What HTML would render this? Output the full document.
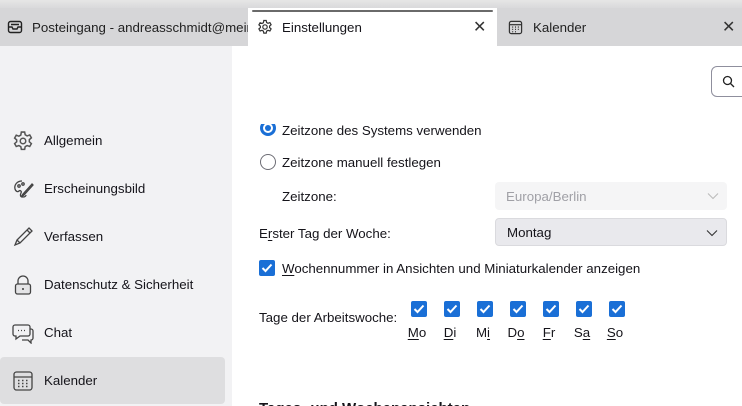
<!DOCTYPE html>
<html><head><meta charset="utf-8">
<style>
*{box-sizing:border-box;margin:0;padding:0}
html,body{width:742px;height:406px;overflow:hidden}
body{font-family:"Liberation Sans",sans-serif;font-size:13.3px;color:#15141a;background:#fff;position:relative}
svg{flex-shrink:0}
.abs{position:absolute}
#top{left:0;top:0;width:742px;height:8px;background:linear-gradient(#e6e6e6,#d9d9db)}
#strip{left:0;top:8px;width:742px;height:38px;background:#d6d6d8}
.tab{top:8px;height:38px;display:flex;align-items:center;white-space:nowrap;overflow:hidden}
#side{left:0;top:46px;width:232px;height:360px;background:#f2f2f4}
.item{left:0;width:225px;height:47px;display:flex;align-items:center;padding-left:12px}
.item svg{margin-right:10px}
.sel{background:#dedee0;border-radius:4px}
.dd{left:495px;width:232px;height:28px;border-radius:4px;padding-left:11px;display:flex;align-items:center}
.cb{width:16px;height:16px;background:#1a6fd6;border-radius:2px;display:flex;align-items:center;justify-content:center}
.day{top:301px;width:16px}
.dl{top:325px;width:30px;text-align:center}
u{text-decoration:underline;text-underline-offset:2px}
</style></head><body>
<div id="top" class="abs"></div>
<div id="strip" class="abs"></div>
<div class="abs tab" style="left:0;width:248px;padding-left:7px">
<svg width="16" height="16" viewBox="0 0 16 16" fill="none" stroke="#222" stroke-width="1.4"><rect x="1.5" y="2.5" width="13" height="11" rx="2"/><path d="M1.5 8h3.5l1 2h4l1-2h3.5M4 5.5h8"/></svg>
<span style="margin-left:9px;color:#222">Posteingang - andreasschmidt@mein.g</span></div>
<div class="abs tab" style="left:248px;width:249px;background:#fff;padding-left:9px">
<div class="abs" style="left:4px;top:2px;width:241px;height:2px;background:#6a6a6a;border-radius:1px"></div>
<svg width="16" height="16" viewBox="0 0 16 16" fill="none" stroke="#333" stroke-width="1.2"><path d="M6.8 1.5h2.4l.4 2 1.4.8 1.9-.7 1.2 2.1-1.5 1.3v1.6l1.5 1.3-1.2 2.1-1.9-.7-1.4.8-.4 2H6.8l-.4-2-1.4-.8-1.9.7-1.2-2.1 1.5-1.3V7.2L1.9 5.9l1.2-2.1 1.9.7 1.4-.8z"/><circle cx="8" cy="8" r="2.2"/></svg>
<span style="margin-left:9px">Einstellungen</span>
<span class="abs" style="left:225px;top:9px;font-size:16px;color:#333">✕</span></div>
<div class="abs tab" style="left:508px;width:234px">
<svg width="15" height="15" viewBox="0 0 16 16" fill="none" stroke="#333" stroke-width="1.3"><rect x="1.5" y="1.5" width="13" height="13" rx="2"/><path d="M1.5 5h13"/><path d="M4.5 7.5h1M7.5 7.5h1M10.5 7.5h1M4.5 10h1M7.5 10h1M10.5 10h1M4.5 12.5h1M7.5 12.5h1" stroke-width="1.4"/></svg>
<span style="margin-left:10px;color:#222">Kalender</span>
<span class="abs" style="left:214px;top:9px;font-size:16px;color:#333">✕</span></div>

<div id="side" class="abs"></div>
<div class="abs item" style="top:117px"><svg width="22" height="22" viewBox="0 0 16 16" fill="none" stroke="#555" stroke-width="1.1"><path d="M6.8 1.5h2.4l.4 2 1.4.8 1.9-.7 1.2 2.1-1.5 1.3v1.6l1.5 1.3-1.2 2.1-1.9-.7-1.4.8-.4 2H6.8l-.4-2-1.4-.8-1.9.7-1.2-2.1 1.5-1.3V7.2L1.9 5.9l1.2-2.1 1.9.7 1.4-.8z"/><circle cx="8" cy="8" r="2"/></svg>Allgemein</div>
<div class="abs item" style="top:165px"><svg width="22" height="22" viewBox="0 0 22 22" fill="none" stroke="#444" stroke-width="1.3"><path d="M10 3C5 3 2 7 3 11c1 3 3 3 4 2s3 0 2 2-1 4 2 4c2 0 3-1 3-2"/><circle cx="7" cy="8" r="1.2"/><circle cx="11" cy="6" r="1.2"/><path d="M20 6L11 16l-2 3 3-2 9-10z" fill="#666"/></svg>Erscheinungsbild</div>
<div class="abs item" style="top:213px"><svg width="22" height="22" viewBox="0 0 22 22" fill="none" stroke="#444" stroke-width="1.3"><path d="M17 2l3 3L8 17l-5 2 2-5z"/><path d="M15 4l3 3M5 14l3 3"/></svg>Verfassen</div>
<div class="abs item" style="top:261px"><svg width="22" height="22" viewBox="0 0 22 22" fill="none" stroke="#444" stroke-width="1.3"><path d="M6 10V7a5 5 0 0110 0v3"/><rect x="3.5" y="10" width="15" height="10" rx="2" fill="#e4e4e6"/><path d="M11 14v2" stroke-width="1.6"/></svg>Datenschutz &amp; Sicherheit</div>
<div class="abs item" style="top:309px"><svg width="22" height="22" viewBox="0 0 22 22" fill="none" stroke="#444" stroke-width="1.3"><path d="M3 3h13a2 2 0 012 2v7a2 2 0 01-2 2H8l-4 3v-3H3a2 2 0 01-2-2V5a2 2 0 012-2z"/><path d="M18 7h1a2 2 0 012 2v7a2 2 0 01-2 2v3l-3-3h-6"/><path d="M6 8.5h1M9 8.5h1M12 8.5h1"/></svg>Chat</div>
<div class="abs item sel" style="top:357px"><svg width="22" height="22" viewBox="0 0 22 22" fill="none" stroke="#444" stroke-width="1.3"><rect x="2" y="2" width="18" height="18" rx="2.5"/><path d="M2 7h18"/><path d="M6 10.5h1.5M10 10.5h1.5M14 10.5h1.5M6 13.5h1.5M10 13.5h1.5M14 13.5h1.5M6 16.5h1.5M10 16.5h1.5M14 16.5h1.5" stroke-width="1.6"/></svg>Kalender</div>

<div class="abs" style="left:711px;top:66px;width:40px;height:31px;border:1px solid #8f8f9d;border-radius:6px;background:#fff"><svg class="abs" style="left:10px;top:8px" width="13" height="13" viewBox="0 0 13 13" fill="none" stroke="#222" stroke-width="1.3"><circle cx="5.5" cy="5.5" r="4"/><path d="M8.5 8.5l3.5 3.5"/></svg></div>

<div class="abs" style="left:232px;top:124px;width:510px;height:282px;overflow:hidden">
 <div class="abs" style="left:28px;top:-4px;width:16px;height:16px;border-radius:50%;background:#1a6fd6"><div class="abs" style="left:3px;top:3px;width:10px;height:10px;border-radius:50%;background:#fff"></div><div class="abs" style="left:5px;top:5px;width:6px;height:6px;border-radius:50%;background:#1a6fd6"></div></div>
 <div class="abs" style="left:50px;top:-1px;line-height:15px">Zeitzone des Systems verwenden</div>
</div>
<div class="abs" style="left:260px;top:154px;width:16px;height:16px;border-radius:50%;border:1px solid #6d6d75;background:#fff"></div>
<div class="abs" style="left:282px;top:155px">Zeitzone manuell festlegen</div>
<div class="abs" style="left:282px;top:189px">Zeitzone:</div>
<div class="abs dd" style="top:182px;background:#f5f5f6;color:#a0a0a6">Europa/Berlin<svg class="abs" style="right:8px;top:10px" width="12" height="8" viewBox="0 0 12 8" fill="none" stroke="#bbb" stroke-width="1.1"><path d="M1 1.5l5 5 5-5"/></svg></div>
<div class="abs" style="left:259px;top:226px">E<u>r</u>ster Tag der Woche:</div>
<div class="abs dd" style="top:218px;background:#e9e9ed;border:1px solid #dadade">Montag<svg class="abs" style="right:8px;top:10px" width="12" height="8" viewBox="0 0 12 8" fill="none" stroke="#333" stroke-width="1.1"><path d="M1 1.5l5 5 5-5"/></svg></div>

<div class="abs cb" style="left:259px;top:260px"><svg width="12" height="10" viewBox="0 0 12 10" fill="none" stroke="#fff" stroke-width="2"><path d="M1.5 5l3 3 6-6.5"/></svg></div>
<div class="abs" style="left:282px;top:261px"><u>W</u>ochennummer in Ansichten und Miniaturkalender anzeigen</div>

<div class="abs" style="left:259px;top:310px">Tage der Arbeitswoche:</div>
<div class="abs cb day" style="left:411px"><svg width="12" height="10" viewBox="0 0 12 10" fill="none" stroke="#fff" stroke-width="2"><path d="M1.5 5l3 3 6-6.5"/></svg></div>
<div class="abs cb day" style="left:444px"><svg width="12" height="10" viewBox="0 0 12 10" fill="none" stroke="#fff" stroke-width="2"><path d="M1.5 5l3 3 6-6.5"/></svg></div>
<div class="abs cb day" style="left:477px"><svg width="12" height="10" viewBox="0 0 12 10" fill="none" stroke="#fff" stroke-width="2"><path d="M1.5 5l3 3 6-6.5"/></svg></div>
<div class="abs cb day" style="left:510px"><svg width="12" height="10" viewBox="0 0 12 10" fill="none" stroke="#fff" stroke-width="2"><path d="M1.5 5l3 3 6-6.5"/></svg></div>
<div class="abs cb day" style="left:543px"><svg width="12" height="10" viewBox="0 0 12 10" fill="none" stroke="#fff" stroke-width="2"><path d="M1.5 5l3 3 6-6.5"/></svg></div>
<div class="abs cb day" style="left:576px"><svg width="12" height="10" viewBox="0 0 12 10" fill="none" stroke="#fff" stroke-width="2"><path d="M1.5 5l3 3 6-6.5"/></svg></div>
<div class="abs cb day" style="left:609px"><svg width="12" height="10" viewBox="0 0 12 10" fill="none" stroke="#fff" stroke-width="2"><path d="M1.5 5l3 3 6-6.5"/></svg></div>
<div class="abs dl" style="left:402px"><u>M</u>o</div>
<div class="abs dl" style="left:435px"><u>D</u>i</div>
<div class="abs dl" style="left:468px">M<u>i</u></div>
<div class="abs dl" style="left:501px">D<u>o</u></div>
<div class="abs dl" style="left:534px"><u>F</u>r</div>
<div class="abs dl" style="left:567px">S<u>a</u></div>
<div class="abs dl" style="left:600px"><u>S</u>o</div>

<div class="abs" style="left:259px;top:400px;font-size:15px;font-weight:bold;color:#15141a;line-height:18px">Tages- und Wochenansichten</div>
</body></html>
